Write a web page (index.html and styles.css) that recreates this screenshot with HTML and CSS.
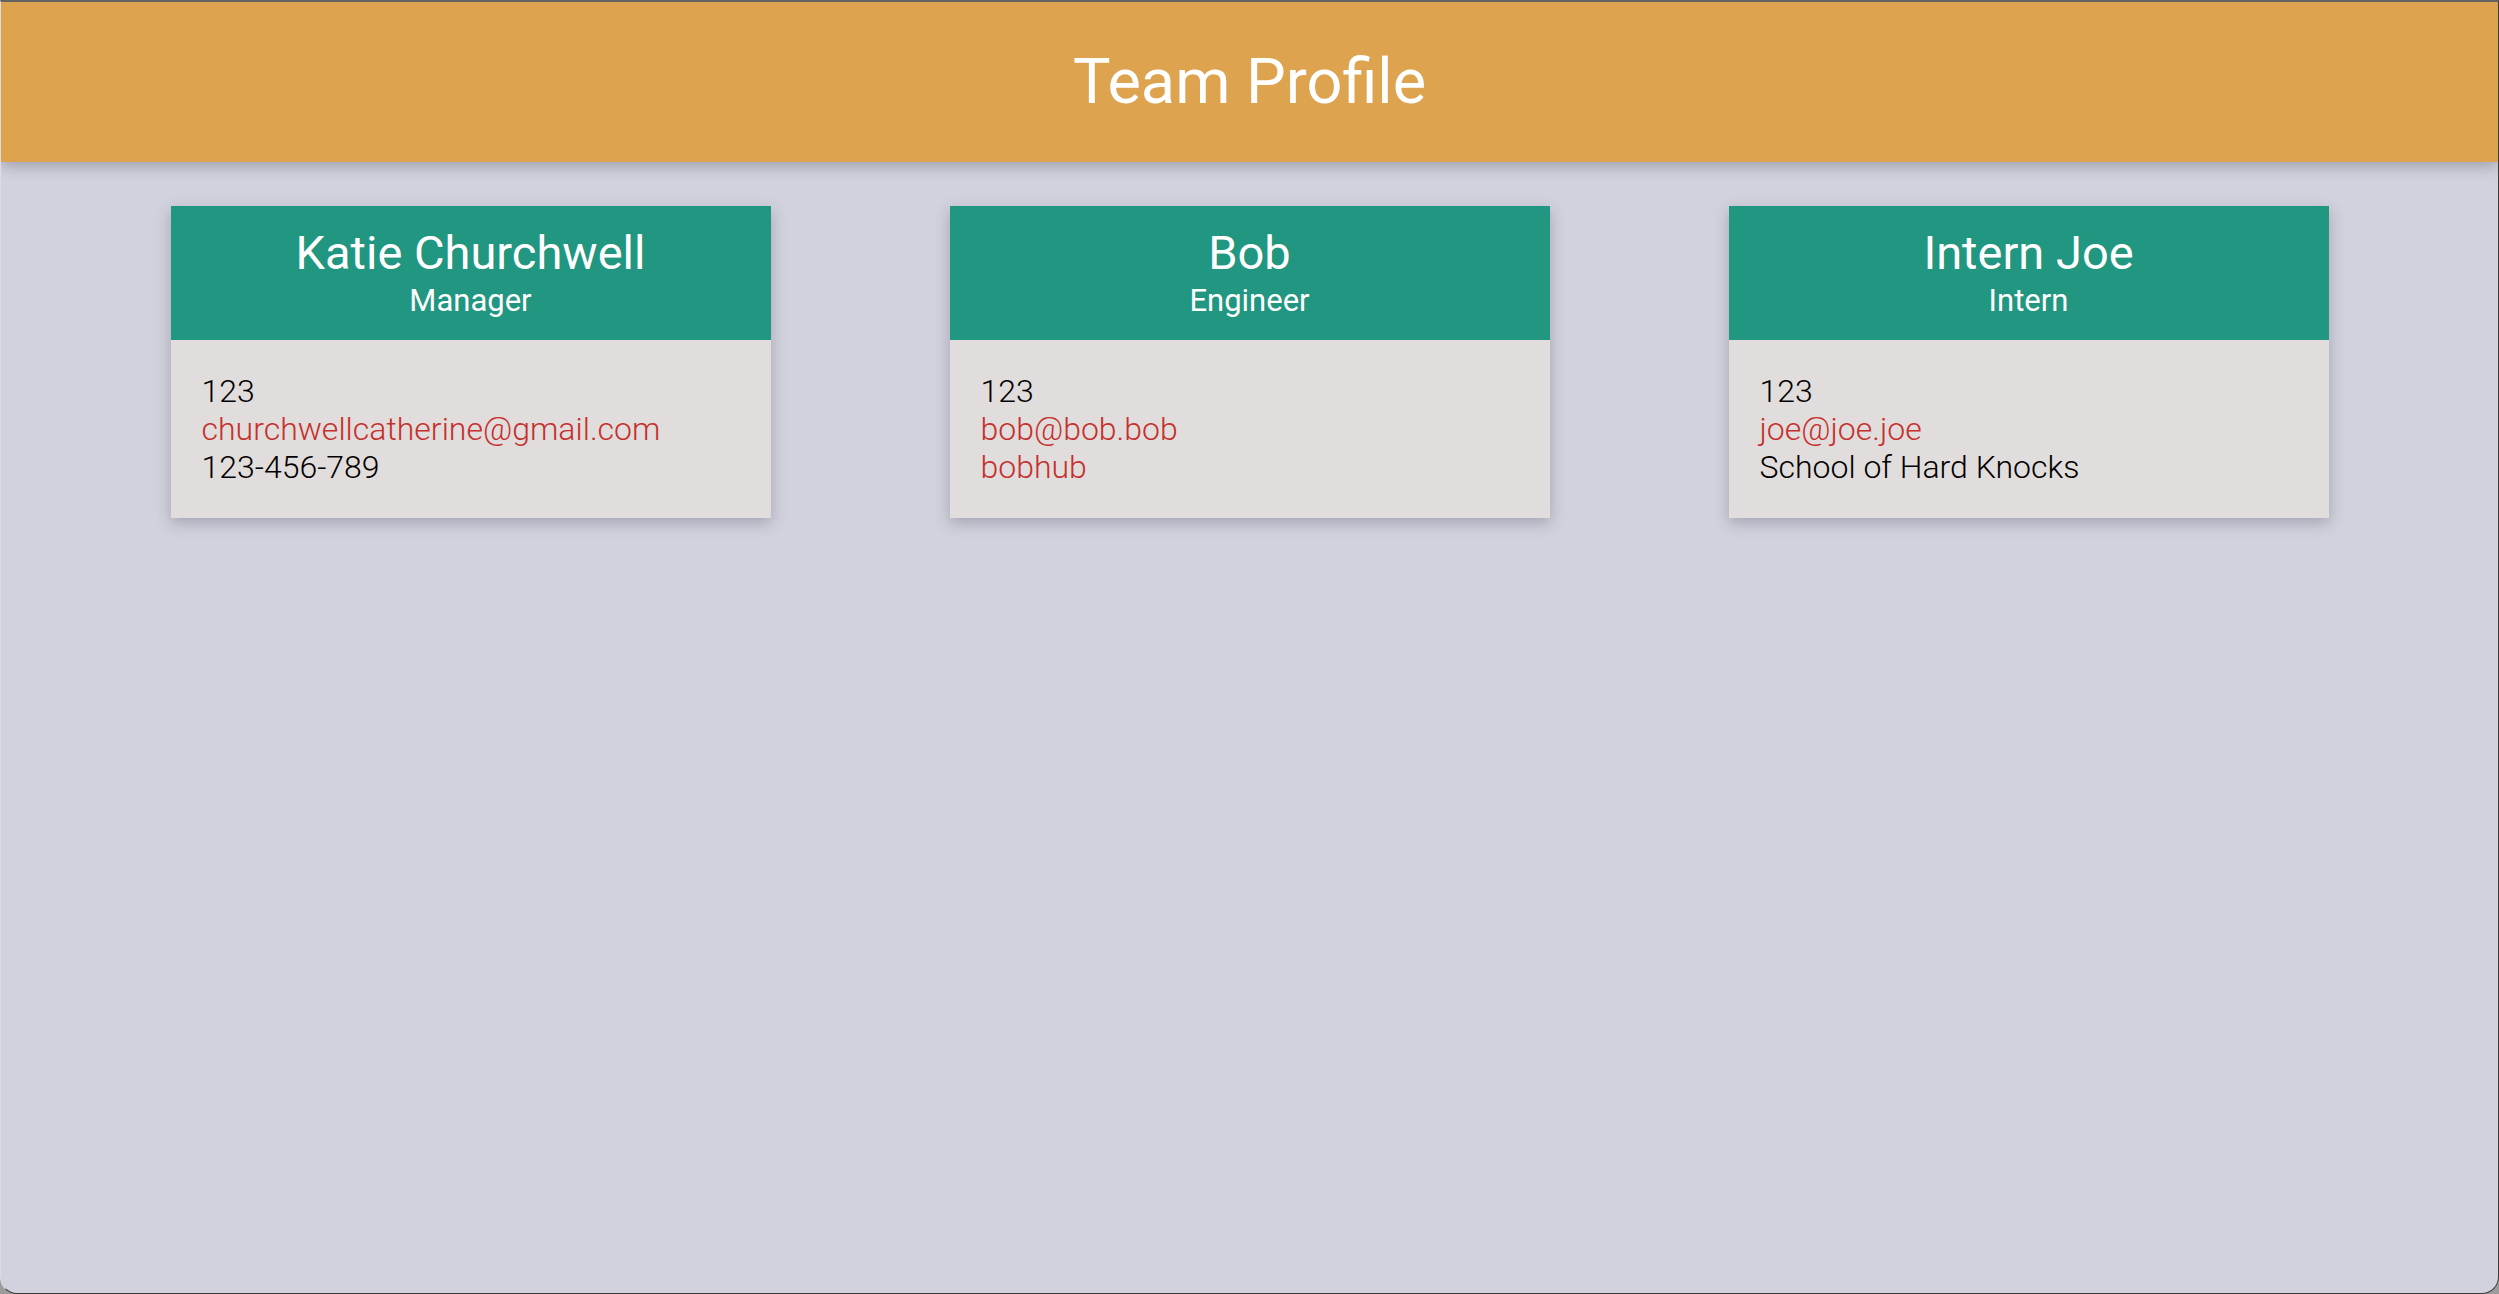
FILE: index.html
```html
<!DOCTYPE html>
<html lang="en">
<head>
<meta charset="utf-8">
<title>Team Profile</title>
<link rel="stylesheet" href="styles.css">
</head>
<body>
<div class="window">
  <header class="topbar">
    <h1 class="title">Team Profile</h1>
  </header>
  <main class="team">
    <section class="card">
      <div class="card-head">
        <h2 class="name">Katie Churchwell</h2>
        <div class="role">Manager</div>
      </div>
      <div class="card-body">
        <div class="line">123</div>
        <div class="line link">churchwellcatherine@gmail.com</div>
        <div class="line">123-456-789</div>
      </div>
    </section>
    <section class="card">
      <div class="card-head">
        <h2 class="name">Bob</h2>
        <div class="role">Engineer</div>
      </div>
      <div class="card-body">
        <div class="line">123</div>
        <div class="line link">bob@bob.bob</div>
        <div class="line link">bobhub</div>
      </div>
    </section>
    <section class="card">
      <div class="card-head">
        <h2 class="name">Intern Joe</h2>
        <div class="role">Intern</div>
      </div>
      <div class="card-body">
        <div class="line">123</div>
        <div class="line link">joe@joe.joe</div>
        <div class="line">School of Hard Knocks</div>
      </div>
    </section>
  </main>
</div>
</body>
</html>
```
FILE: styles.css
```css
html, body {
  margin: 0;
  padding: 0;
  height: 100%;
}
body {
  background: #9c9c9c;
  font-family: Roboto, "Liberation Sans", sans-serif;
}
.window {
  box-sizing: border-box;
  height: 1294px;
  background: #d2d2de;
  border-top: 2px solid #626262;
  border-left: 1px solid #dcdce4;
  border-right: 1px solid #3a3a3a;
  border-bottom: 1px solid #3a3a3a;
  border-radius: 0 0 17px 17px;
  overflow: hidden;
  display: flex;
  flex-direction: column;
}
.topbar {
  height: 160px;
  background: #dda34f;
  display: flex;
  align-items: center;
  justify-content: center;
  box-shadow: 0 4px 14px rgba(40, 40, 60, 0.3);
  position: relative;
  z-index: 1;
}
.title {
  margin: 0;
  color: #ffffff;
  font-size: 63px;
  font-weight: 400;
  line-height: 80px;
}
.team {
  padding-top: 44px;
  display: grid;
  grid-template-columns: repeat(3, 600px);
  column-gap: 179px;
  justify-content: center;
  align-items: start;
}
.card {
  background: #e0dddc;
  box-shadow: 0 5px 14px rgba(60, 60, 80, 0.3);
}
.card-head {
  background: #219680;
  color: #ffffff;
  text-align: center;
  padding: 20px 0 22px;
}
.name {
  margin: 0 0 4px;
  font-size: 47px;
  font-weight: 400;
  line-height: 54px;
}
.role {
  font-size: 31px;
  font-weight: 400;
  line-height: 34px;
}
.card-body {
  padding: 32px 31px;
  font-size: 32px;
  font-weight: 300;
  line-height: 38px;
  color: #000000;
}
.link {
  color: #c6302d;
}
```
